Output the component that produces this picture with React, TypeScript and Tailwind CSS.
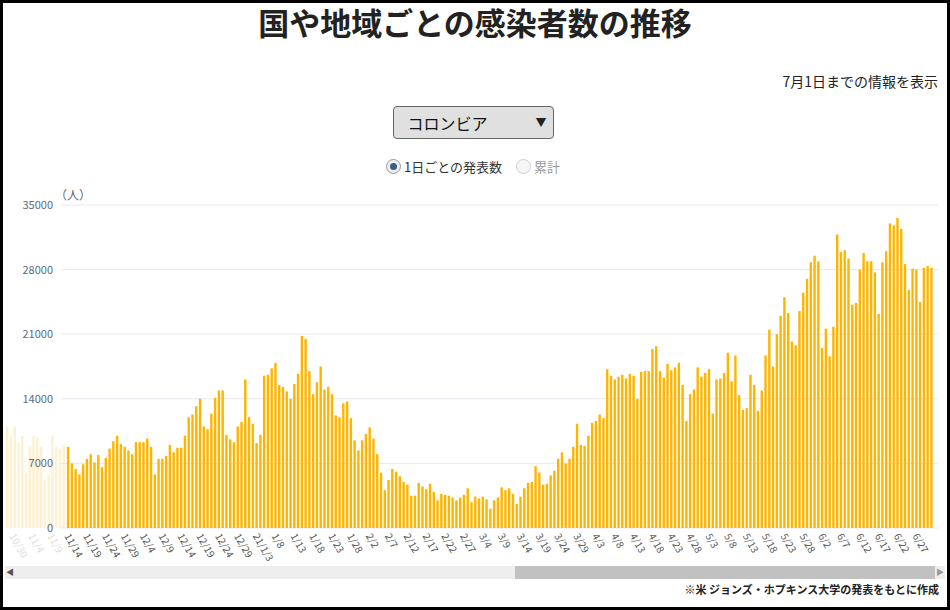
import React from "react";

const font = { fontFamily: '"Noto Sans CJK JP", "Noto Sans", sans-serif' };

const daily = [
  8.8, 7, 6.4, 5.8, 6.9, 7.5, 8, 7.1, 7.9, 6.6, 7.6, 8.6, 9.4, 10, 9.1, 8.8, 8.4,
  8, 9.3, 9.3, 9.3, 9.7, 8.8, 5.8, 7.5, 7.5, 7.8, 9, 8.2, 8.7, 8.7, 10, 12, 12.3, 13.2, 14, 11, 10.7, 12.4, 14.1, 14.9, 14.9, 10.1, 9.6, 9.3, 11, 11.5, 16.1,
  12, 11.3, 9.2, 10.1, 16.5, 16.6, 17.3, 17.9, 15.5, 15.3, 14.8, 14, 15.6, 16.7, 20.8, 20.5, 17, 14.5, 15.8, 17.5, 15, 15.3, 14.5, 12.2, 12, 13.5, 13.7, 11.9, 9.5, 8.4, 9.5,
  10.2, 10.9, 9.7, 8, 6, 4.1, 5.2, 6.4, 6.1, 5.6, 5, 4.7, 3.5, 3.5, 4.9, 4.5, 4.2, 4.8, 3.9, 3, 3.7, 3.6, 3.5, 3.3, 3, 3.3, 3.6, 4.3,
  2.8, 3.4, 3.2, 3.4, 3.1, 2.1, 3, 3.3, 4.4, 4.1, 4.3, 3.7, 2.6, 3.4, 4.3, 4.9, 5, 6.7, 6, 4.7, 4.8, 5.7, 6.2, 7.5, 8.2, 7, 7.5, 8.8, 11.3, 9, 8.9,
  10, 11.4, 11.6, 12.3, 11.9, 17.2, 16.5, 16.1, 16.4, 16.6, 16.2, 16.7, 16.5, 14, 16.9, 17, 17, 19.4, 19.7, 17, 16.3, 17.8, 17.1, 17.4, 17.9, 15.5, 11.6, 14.5, 15, 17.4,
  16.4, 16.8, 17.2, 12.4, 16.1, 16.2, 16.8, 19, 15.9, 18.7, 14.4, 12.8, 13, 16.6, 15.5, 12.7, 14.9, 18.7, 21.5, 17.5, 21, 23, 25, 23.3, 20.2, 19.8, 23.5, 25.5, 27, 28.8, 29.5,
  28.9, 19.5, 21.6, 18.6, 21.8, 31.8, 29.9, 30.1, 29.2, 24.2, 24.4, 28, 29.8, 28.9, 28.9, 27.7, 23.2, 28.8, 30, 33, 32.8, 33.6, 32.4, 28.6, 25.8, 28.1, 28, 24.5, 28.2, 28.4,
  28.2,
];
const faded = [11, 10, 11, 9.3, 10, 6, 8.8, 10, 9.8, 8.8, 5.2, 5.8, 10, 8.8, 8.6, 9];

const labels = [
  "11/14", "11/19", "11/24", "11/29", "12/4", "12/9", "12/14", "12/19", "12/24", "12/29", "21/1/3", "1/8", "1/13", "1/18", "1/23", "1/28",
  "2/2", "2/7", "2/12", "2/17", "2/22", "2/27", "3/4", "3/9", "3/14", "3/19", "3/24", "3/29", "4/3", "4/8", "4/13", "4/18", "4/23", "4/28",
  "5/3", "5/8", "5/13", "5/18", "5/23", "5/28", "6/2", "6/7", "6/12", "6/17", "6/22", "6/27",
];

const X0 = 65;
const STEP = 3.77;
const BASE = 350;
const SCALE = 323 / 35;

function Chart() {
  return (
    <svg width="942" height="390" viewBox="0 0 942 390" className="block">
      {faded.map((v, i) => (
        <rect key={"f" + i} x={3 + i * STEP} y={BASE - v * SCALE} width="2.4" height={v * SCALE} fill="#fff0d0" />
      ))}
      {[0, 7, 14, 21, 28, 35].map((t) => (
        <g key={t}>
          <line x1="58" x2="935" y1={BASE - t * SCALE} y2={BASE - t * SCALE} stroke="#e6e9f0" strokeWidth="1" />
          <text x="50" y={BASE - t * SCALE + 4} textAnchor="end" fontSize="11" fill="#5b6b7b" style={font}>
            {t === 0 ? "0" : t * 1000}
          </text>
        </g>
      ))}
      <text x="52" y="22" fontSize="12" fill="#666" style={font}>（人）</text>
      {daily.map((v, i) => (
        <rect key={i} x={X0 + i * STEP - 1.1} y={BASE - v * SCALE} width="2.4" height={v * SCALE} fill="#ffb400" />
      ))}
      {["10/30", "11/4", "11/9"].map((l, i) => (
        <text key={l} x={6 + i * 19} y={BASE + 8} fontSize="10" fill="#ddd" transform={`rotate(60 ${6 + i * 19} ${BASE + 8})`} style={font}>{l}</text>
      ))}
      {labels.map((l, i) => {
        const x = X0 + i * 5 * STEP - 4;
        return (
          <text key={l} x={x} y={BASE + 8} fontSize="10" fill="#555" transform={`rotate(60 ${x} ${BASE + 8})`} style={font}>{l}</text>
        );
      })}
    </svg>
  );
}

export default function App() {
  return (
    <div className="w-[950px] h-[610px] bg-white border-[3px] border-black overflow-hidden flex flex-col" style={font}>
      <h1 className="text-center text-[31px] font-bold text-[#222] leading-[40px] mt-[-1px]">国や地域ごとの感染者数の推移</h1>
      <div className="text-right text-[14px] text-[#222] pr-[9px] mt-[29px] leading-5">7月1日までの情報を表示</div>
      <div className="flex justify-center mt-[15px]">
        <div className="w-[161px] h-[33px] bg-[#e0e0e0] border border-[#666] rounded-[4px] flex items-center justify-between pl-[14px] pr-[6px] ml-[-4px]">
          <span className="text-[16px] text-[#111]">コロンビア</span>
          <span className="text-[11px] text-[#222]">▼</span>
        </div>
      </div>
      <div className="flex justify-center items-center gap-[14px] mt-[18px] text-[13px] ml-[-4px]">
        <label className="flex items-center gap-[3px] text-[#333]">
          <span className="w-[15px] h-[15px] rounded-full border border-[#999] bg-[#eee] flex items-center justify-center">
            <span className="w-[7px] h-[7px] rounded-full bg-[#3b5d84]" />
          </span>
          1日ごとの発表数
        </label>
        <label className="flex items-center gap-[3px] text-[#999]">
          <span className="w-[15px] h-[15px] rounded-full border border-[#ccc] bg-[#f6f6f6]" />
          累計
        </label>
      </div>
      <div className="mt-[1px]">
        <Chart />
      </div>
      <div className="h-[13px] mx-[2px] mt-[-2px] bg-[#eeeeee] flex items-center">
        <span className="text-[8px] text-[#555] w-[10px] text-center">◀</span>
        <div className="flex-1 h-full flex">
          <div className="w-[500px]" />
          <div className="flex-1 bg-[#c1c1c1]" />
        </div>
        <span className="text-[8px] text-[#999] w-[10px] text-center">▶</span>
      </div>
      <div className="text-right text-[11px] font-bold text-[#222] pr-[8px] mt-[2px]">※米 ジョンズ・ホプキンス大学の発表をもとに作成</div>
    </div>
  );
}
